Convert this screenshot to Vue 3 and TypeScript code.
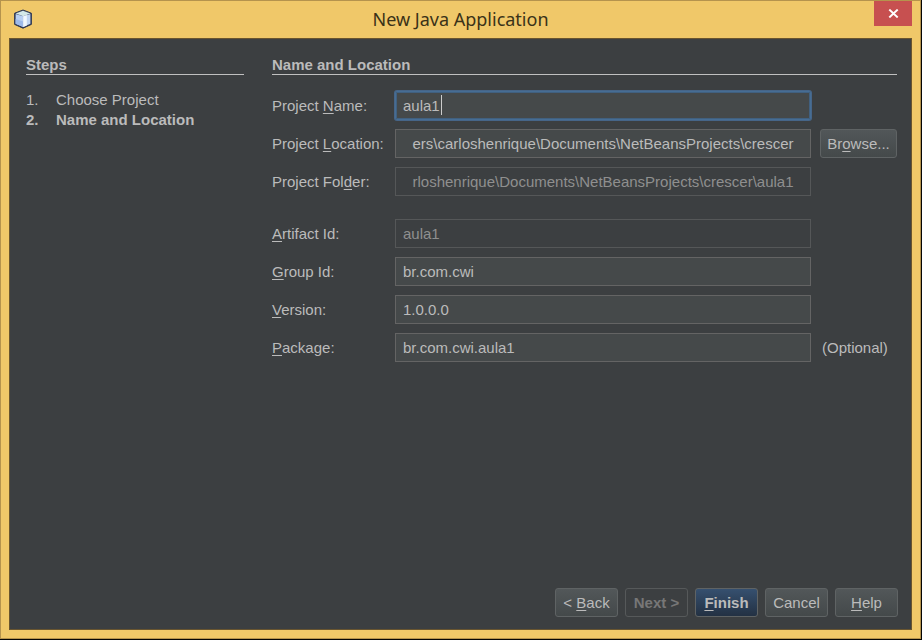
<script setup lang="ts">
import { computed, onMounted, ref } from 'vue'

interface Field {
  id: string
  before: string
  key: string
  after: string
  value: string
  readonly?: boolean
  path?: boolean
  browse?: boolean
  note?: string
  gapAbove?: boolean
}

const steps = ['Choose Project', 'Name and Location']
const currentStep = 1

const fields = ref<Field[]>([
  { id: 'name', before: 'Project ', key: 'N', after: 'ame:', value: 'aula1' },
  { id: 'location', before: 'Project ', key: 'L', after: 'ocation:', value: 'ers\\carloshenrique\\Documents\\NetBeansProjects\\crescer', path: true, browse: true },
  { id: 'folder', before: 'Project Fol', key: 'd', after: 'er:', value: 'rloshenrique\\Documents\\NetBeansProjects\\crescer\\aula1', path: true, readonly: true },
  { id: 'artifact', before: '', key: 'A', after: 'rtifact Id:', value: 'aula1', readonly: true, gapAbove: true },
  { id: 'group', before: '', key: 'G', after: 'roup Id:', value: 'br.com.cwi' },
  { id: 'version', before: '', key: 'V', after: 'ersion:', value: '1.0.0.0' },
  { id: 'package', before: '', key: 'P', after: 'ackage:', value: 'br.com.cwi.aula1', note: '(Optional)' },
])

// The project name draws its own steady caret after the typed text.
const pen = document.createElement('canvas').getContext('2d')
const caretLeft = computed(() => {
  if (!pen) return '0px'
  pen.font = '15px "Liberation Sans", Arial, sans-serif'
  return `${Math.round(pen.measureText(fields.value[0].value).width) + 9}px`
})

const form = ref<HTMLFormElement | null>(null)
onMounted(() => form.value?.querySelector('input')?.focus())
</script>

<template>
  <div class="window">
    <header class="titlebar">
      <svg class="app-icon" viewBox="0 0 20 20" aria-hidden="true">
        <path d="M10 1 18.4 4.2V15.4L10 19.2 1.6 15.4V4.2Z" fill="#303a55" stroke="#303a55" stroke-linejoin="round" />
        <path d="M10 1.8 17.4 4.6 10.3 7.2 2.6 4.6Z" fill="#d3e8e8" />
        <path d="M2.6 4.9 10.2 7.2V18L2.6 14.8Z" fill="#b9d0f2" />
        <path d="M2.6 10 10.2 12.6V18L2.6 14.8Z" fill="#9dbaea" />
        <path d="M10.2 7.2 17.4 4.9V14.8L10.2 18Z" fill="#c2d6f2" />
        <path d="M10.2 7.2 13.8 6V16.4L10.2 18Z" fill="#f0f7fd" />
      </svg>
      <h1>New Java Application</h1>
      <button class="close" type="button" aria-label="Close">
        <svg viewBox="0 0 11 9" aria-hidden="true"><path d="M1.3.6 9.7 8.4M9.7.6 1.3 8.4" stroke="#fff" stroke-width="2" /></svg>
      </button>
    </header>

    <div class="content">
      <div class="columns">
        <nav class="steps">
          <h2>Steps</h2>
          <ol>
            <li v-for="(step, i) in steps" :key="step" :class="{ current: i === currentStep }">
              <span class="number">{{ i + 1 }}.</span><span>{{ step }}</span>
            </li>
          </ol>
        </nav>

        <main>
          <h2>Name and Location</h2>
          <form ref="form" @submit.prevent>
            <div v-for="(f, i) in fields" :key="f.id" class="row" :class="{ spaced: f.gapAbove }">
              <label :for="f.id">{{ f.before }}<u>{{ f.key }}</u>{{ f.after }}</label>
              <div class="box">
                <input :id="f.id" v-model="f.value" type="text" :class="{ path: f.path }" :readonly="f.readonly" spellcheck="false" autocomplete="off" />
                <span v-if="i === 0" class="caret" :style="{ left: caretLeft }"></span>
              </div>
              <button v-if="f.browse" class="btn" type="button">Br<u>o</u>wse...</button>
              <span v-else-if="f.note" class="note">{{ f.note }}</span>
            </div>
          </form>
        </main>
      </div>

      <footer>
        <button class="btn" type="button">&lt; <u>B</u>ack</button>
        <button class="btn" type="button" disabled>Next &gt;</button>
        <button class="btn primary" type="button"><u>F</u>inish</button>
        <button class="btn" type="button">Cancel</button>
        <button class="btn" type="button"><u>H</u>elp</button>
      </footer>
    </div>
  </div>
</template>

<style>
body {
  background: #050505;
}
</style>

<style scoped>
.window {
  box-sizing: border-box;
  display: flex;
  flex-direction: column;
  min-height: calc(100vh - 1px);
  margin: 0 1px 1px 0;
  padding: 0 8px 8px;
  border: 1px solid #b5934d;
  background: #f0c869;
  color: #bbb;
  font: 15px/20px "Liberation Sans", Arial, sans-serif;
}
.titlebar {
  display: grid;
  grid-template-columns: 38px 1fr 38px;
  align-items: start;
  height: 37px;
}
.app-icon {
  width: 20px;
  height: 20px;
  margin: 8px 0 0 4px;
}
h1 {
  margin: 6px 0 0;
  color: #3a3218;
  font: 18px/24px "Noto Sans", "Open Sans", sans-serif;
  text-align: center;
}
.close {
  display: grid;
  place-items: center;
  height: 25px;
  padding: 0;
  border: 0;
  background: #c75050;
}
.close svg {
  width: 11px;
  height: 9px;
}
.content {
  flex: 1;
  display: flex;
  flex-direction: column;
  border: 1px solid #69552f;
  background: #3c3f41;
}
.columns {
  flex: 1;
  display: grid;
  grid-template-columns: 218px 1fr;
  gap: 28px;
  padding: 16px 14px 0 16px;
}
h2 {
  margin: 0;
  border-bottom: 1px solid #c0c0c0;
  font-size: 15px;
  line-height: 19px;
}
ol {
  margin: 15px 0 0;
  padding: 0;
  list-style: none;
}
li {
  display: flex;
}
.current {
  font-weight: bold;
}
.number {
  width: 30px;
}
form {
  display: flex;
  flex-direction: column;
  gap: 9px;
  margin-top: 16px;
}
.row {
  display: grid;
  grid-template-columns: 114px 1fr 77px;
  gap: 9px;
  align-items: center;
}
.spaced {
  margin-top: 14px;
}
u {
  text-underline-offset: 2px;
  text-decoration-thickness: 1px;
}
label {
  white-space: nowrap;
}
.box {
  position: relative;
  display: flex;
}
input {
  box-sizing: border-box;
  width: 100%;
  min-width: 0;
  height: 29px;
  margin: 0;
  padding: 0 7px;
  border: 1px solid #646464;
  border-radius: 0;
  outline: 0;
  background: #45494a;
  color: #bbb;
  font: inherit;
  caret-color: transparent;
}
input:read-only {
  border-color: #555758;
  background: #3c3f41;
  color: #8f8f8f;
}
input:focus {
  border-color: #466d94;
  border-radius: 2px;
  box-shadow: 0 0 0 1px #466588, inset 0 0 0 1px #41607f;
}
.path {
  text-align: center;
}
.caret {
  position: absolute;
  top: 4px;
  width: 1px;
  height: 20px;
  background: #ccc;
}
.note {
  padding-left: 2px;
}
.btn {
  box-sizing: border-box;
  height: 29px;
  padding: 0;
  border: 1px solid #5f6364;
  border-radius: 3px;
  background: linear-gradient(#525759, #44494a);
  color: #bbb;
  font: inherit;
  white-space: nowrap;
}
.btn:disabled {
  border-color: #56595a;
  background: #3c3f41;
  color: #777;
  font-weight: bold;
}
.primary {
  background: linear-gradient(#36506f, #233143);
  font-weight: bold;
}
footer {
  display: flex;
  justify-content: flex-end;
  gap: 7px;
  padding: 0 13px 12px;
}
footer .btn {
  width: 63px;
}
</style>
